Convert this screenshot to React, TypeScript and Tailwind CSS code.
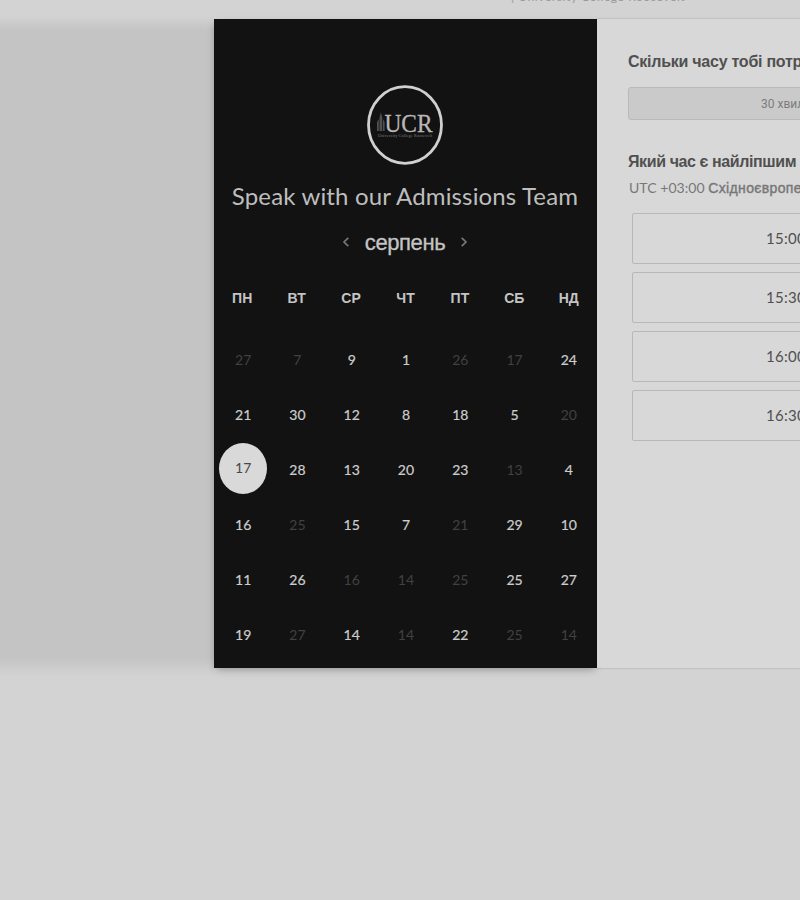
const days = ["ПН", "ВТ", "СР", "ЧТ", "ПТ", "СБ", "НД"];

type Day = { n: number; off?: boolean; selected?: boolean };
const on = (n: number): Day => ({ n });
const off = (n: number): Day => ({ n, off: true });

const weeks: Day[][] = [
  [off(27), off(7), on(9), on(1), off(26), off(17), on(24)],
  [on(21), on(30), on(12), on(8), on(18), on(5), off(20)],
  [{ n: 17, selected: true }, on(28), on(13), on(20), on(23), off(13), on(4)],
  [on(16), off(25), on(15), on(7), off(21), on(29), on(10)],
  [on(11), on(26), off(16), off(14), off(25), on(25), on(27)],
  [on(19), off(27), on(14), off(14), on(22), off(25), off(14)],
];

const slots = ["15:00", "15:30", "16:00", "16:30"];

function Logo() {
  return (
    <svg width="78" height="82" viewBox="0 0 78 82" className="-ml-[1px] block">
      <ellipse cx="39" cy="41" rx="36.500" ry="38.300" fill="none" stroke="#d0d0d0" strokeWidth="2.800" />
      <g fill="#505050">
        <path d="M11 47V38l1.800-3V47zM13.500 47V34l1.400-6 1.400 6V47zM17 47V35l1.600 3V47z" />
      </g>
      <text x="18.500" y="47.500" fontSize="25" fill="#b8b8b8" stroke="#b8b8b8" strokeWidth="0.300" fontFamily="Liberation Serif, serif" textLength="48" lengthAdjust="spacingAndGlyphs">UCR</text>
      <text x="12" y="52.500" fontSize="4" fill="#858585" fontFamily="Liberation Serif, serif" textLength="54">University College Roosevelt</text>
    </svg>
  );
}

function DayCell({ day }: { day: Day }) {
  if (day.selected) {
    return (
      <div className="flex h-[55px] items-center justify-center">
        <div className="-mt-[2px] flex h-[51px] w-[48px] shrink-0 items-center justify-center rounded-[50%] bg-[#d9d9d9] pb-[2px] text-[#484848]">
          {day.n}
        </div>
      </div>
    );
  }
  return (
    <div className={`flex h-[55px] items-center justify-center ${day.off ? "text-[#414141]" : "text-[#cccccc] [-webkit-text-stroke:0.200px_#cccccc]"}`}>
      {day.n}
    </div>
  );
}

function Calendar() {
  return (
    <section className="flex h-[649px] w-[383px] shrink-0 flex-col bg-[#121212] pt-[65px] shadow-[0_3px_8px_-2px_rgba(0,0,0,0.35)]">
      <div className="flex justify-center">
        <Logo />
      </div>
      <h1 className="-ml-[1px] mt-[14px] h-[32px] whitespace-nowrap text-center font-['Lato'] text-[24px] leading-[32px] tracking-[0.150px] text-[#bebebe]">
        Speak with our Admissions Team
      </h1>
      <div className="-ml-[1px] mt-[16px] flex h-[28px] items-center justify-center gap-[15px] text-[#c4c4c4]">
        <svg width="8" height="12" viewBox="0 0 8 12" fill="none" stroke="#777" strokeWidth="1.700">
          <path d="M6.300 1.800 2 6l4.300 4.200" />
        </svg>
        <span className="pt-[1px] font-['Liberation_Sans'] text-[22px] leading-[28px] tracking-[-0.400px] [-webkit-text-stroke:0.300px_#c4c4c4]">серпень</span>
        <svg width="8" height="12" viewBox="0 0 8 12" fill="none" stroke="#777" strokeWidth="1.700">
          <path d="M1.700 1.800 6 6l-4.300 4.200" />
        </svg>
      </div>
      <div className="ml-[1px] mt-[32px] grid w-[381px] grid-cols-7 text-center font-['Liberation_Sans'] text-[14px] font-bold leading-[20px] text-[#c4c4c4]">
        {days.map((d) => (
          <span key={d}>{d}</span>
        ))}
      </div>
      <div className="ml-[2px] mt-[24px] grid w-[380px] grid-cols-7 font-['Lato'] text-[14px] leading-[20px]">
        {weeks.flat().map((day, i) => (
          <DayCell key={i} day={day} />
        ))}
      </div>
    </section>
  );
}

function TimePanel() {
  return (
    <section className="h-[649px] w-[460px] shrink-0 bg-[#d8d8d8] pl-[31px] pt-[33px] shadow-[0_0_2px_rgba(0,0,0,0.25)]">
      <h2 className="whitespace-nowrap font-['Liberation_Sans'] text-[16px] font-bold leading-[20px] tracking-[-0.250px] text-[#505050]">
        Скільки часу тобі потрібно?
      </h2>
      <div className="mt-[15px] flex h-[33px] w-[400px] items-center whitespace-nowrap rounded-[3px] border border-[#b9b9b9] bg-[#cacaca] pl-[132px] font-['Roboto'] text-[12px] text-[#7c7c7c]">
        30 хвилин
      </div>
      <h2 className="mt-[32px] whitespace-nowrap font-['Liberation_Sans'] text-[16px] font-bold leading-[20px] tracking-[-0.400px] text-[#505050]">
        Який час є найліпшим для тебе?
      </h2>
      <p className="mt-[6px] whitespace-nowrap pl-[1px] text-[14px] leading-[20px] text-[#777]">
        <span className="font-['Lato'] tracking-[0.050px]">UTC +03:00 </span>
        <span className="font-['Liberation_Sans'] tracking-[0.350px] [-webkit-text-stroke:0.400px_#777]">Східноєвропейський час</span>
      </p>
      <div className="ml-1 mt-[15px] flex w-[396px] flex-col gap-2">
        {slots.map((t) => (
          <button
            key={t}
            className="h-[51px] rounded-[2px] border border-[#b8b8b8] pl-[133px] text-left font-['Lato'] text-[15px] tracking-[0.300px] text-[#505050]"
          >
            {t}
          </button>
        ))}
      </div>
    </section>
  );
}

export default function App() {
  return (
    <div className="flex h-[900px] w-full flex-col overflow-hidden bg-[#d3d3d3]">
      <header className="flex h-[19px] shrink-0 items-start pl-[511px] font-['Lato'] text-[12px] leading-[12px] text-[#999]">
        <div className="-mt-[9px] whitespace-nowrap tracking-[0.600px]">| University College Roosevelt</div>
      </header>
      <main className="flex h-[649px] shrink-0">
        <div className="-mt-[3px] h-[660px] w-[214px] shrink-0 bg-[linear-gradient(to_bottom,#d3d3d3_0px,#c4c4c4_14px,#c4c4c4_642px,#d3d3d3_660px)]" />
        <Calendar />
        <TimePanel />
      </main>
    </div>
  );
}
